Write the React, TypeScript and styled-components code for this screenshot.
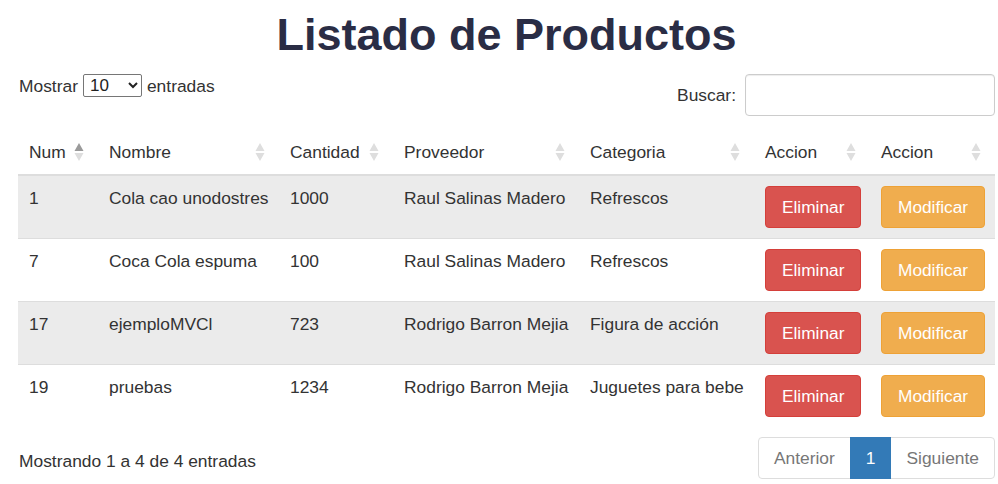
import React from "react";
import styled, { createGlobalStyle } from "styled-components";

const Global = createGlobalStyle`
  html, body { margin: 0; padding: 0; background: #fff; }
  body {
    font-family: "Liberation Sans", Arial, sans-serif;
    font-size: 17.4px;
    line-height: 24px;
    color: #333;
  }
  * { box-sizing: border-box; }
`;

const Page = styled.div`
  padding: 10px 3px 0 18px;
  width: 998px;
`;

const Title = styled.h1`
  margin: 0;
  text-align: center;
  font-size: 45px;
  line-height: 50px;
  font-weight: 700;
  color: #2a2d45;
`;

const Controls = styled.div`
  display: flex;
  justify-content: space-between;
  align-items: flex-start;
  margin-top: 14px;
`;

const LengthLabel = styled.label`
  display: flex;
  align-items: center;
  gap: 5px;
  height: 23px;
  padding-left: 1px;
`;

const Select = styled.select`
  width: 59px;
  height: 23px;
  font-family: "Liberation Sans", Arial, sans-serif;
  font-size: 17px;
  color: #222;
  border: 1px solid #767676;
  border-radius: 2px;
  background: #fff;
  padding: 0 2px;
`;

const SearchLabel = styled.label`
  display: flex;
  align-items: center;
  gap: 9px;
`;

const SearchInput = styled.input`
  width: 250px;
  height: 42px;
  border: 1px solid #ccc;
  border-radius: 4px;
  box-shadow: inset 0 1px 1px rgba(0, 0, 0, 0.075);
  font-size: 16px;
  padding: 6px 12px;
`;

const Table = styled.table`
  margin-top: 14px;
  width: 977px;
  border-collapse: collapse;
  table-layout: fixed;
`;

const Col = styled.col<{ $w: number }>`
  width: ${(p) => p.$w}px;
`;

const Th = styled.th`
  position: relative;
  text-align: left;
  font-weight: 400;
  padding: 10px 30px 10px 11px;
  line-height: 24px;
  border-bottom: 2px solid #ddd;
  white-space: nowrap;
`;

const SortIcon = styled.svg`
  position: absolute;
  right: 14px;
  top: 13px;
  width: 10px;
  height: 18px;
`;

const Tr = styled.tr<{ $striped: boolean }>`
  background: ${(p) => (p.$striped ? "#ebebeb" : "#fff")};
`;

const Td = styled.td<{ $lined: boolean }>`
  padding: 10px 10px 10px 11px;
  vertical-align: top;
  line-height: 24px;
  white-space: nowrap;
  border-bottom: ${(p) => (p.$lined ? "1px solid #ddd" : "0")};
`;

const Btn = styled.button<{ $variant: "danger" | "warning" }>`
  font-family: "Liberation Sans", Arial, sans-serif;
  font-size: 17.3px;
  line-height: 24px;
  padding: 8px 16px;
  border-radius: 4px;
  color: #fff;
  cursor: pointer;
  background: ${(p) => (p.$variant === "danger" ? "#d9534f" : "#f0ad4e")};
  border: 1px solid ${(p) => (p.$variant === "danger" ? "#d43f3a" : "#eea236")};
`;

const Footer = styled.div`
  display: flex;
  justify-content: space-between;
  align-items: flex-start;
  margin-top: 10px;
`;

const Info = styled.div`
  padding-top: 12px;
  padding-left: 1px;
`;

const Pager = styled.ul`
  display: flex;
  list-style: none;
  margin: 0;
  padding: 0;
`;

const PageItem = styled.li<{ $active?: boolean; $first?: boolean; $last?: boolean }>`
  padding: 8px 15px;
  line-height: 24px;
  height: 42px;
  color: ${(p) => (p.$active ? "#fff" : "#777")};
  background: ${(p) => (p.$active ? "#337ab7" : "#fff")};
  border: 1px solid ${(p) => (p.$active ? "#337ab7" : "#ddd")};
  margin-left: ${(p) => (p.$first ? "0" : "-1px")};
  border-radius: ${(p) =>
    p.$first ? "4px 0 0 4px" : p.$last ? "0 4px 4px 0" : "0"};
  position: relative;
  z-index: ${(p) => (p.$active ? 1 : 0)};
`;

const Sort = ({ active }: { active?: boolean }) => (
  <SortIcon viewBox="0 0 10 18">
    <polygon points="5,0 9.5,8 0.5,8" fill={active ? "#9a9a9a" : "#dedede"} />
    <polygon points="0.5,10 9.5,10 5,18" fill="#dedede" />
  </SortIcon>
);

const headers = ["Num", "Nombre", "Cantidad", "Proveedor", "Categoria", "Accion", "Accion"];
const widths = [80, 181, 114, 186, 175, 116, 125];

const rows = [
  { num: "1", nombre: "Cola cao unodostres", cantidad: "1000", proveedor: "Raul Salinas Madero", categoria: "Refrescos" },
  { num: "7", nombre: "Coca Cola espuma", cantidad: "100", proveedor: "Raul Salinas Madero", categoria: "Refrescos" },
  { num: "17", nombre: "ejemploMVCl", cantidad: "723", proveedor: "Rodrigo Barron Mejia", categoria: "Figura de acción" },
  { num: "19", nombre: "pruebas", cantidad: "1234", proveedor: "Rodrigo Barron Mejia", categoria: "Juguetes para bebe" },
];

export default function App() {
  return (
    <Page>
      <Global />
      <Title>Listado de Productos</Title>
      <Controls>
        <LengthLabel>
          Mostrar
          <Select defaultValue="10">
            <option value="10">10</option>
            <option value="25">25</option>
            <option value="50">50</option>
            <option value="100">100</option>
          </Select>
          entradas
        </LengthLabel>
        <SearchLabel>
          Buscar:
          <SearchInput type="search" />
        </SearchLabel>
      </Controls>
      <Table>
        <colgroup>
          {widths.map((w, i) => (
            <Col key={i} $w={w} />
          ))}
        </colgroup>
        <thead>
          <tr>
            {headers.map((h, i) => (
              <Th key={i}>
                {h}
                <Sort active={i === 0} />
              </Th>
            ))}
          </tr>
        </thead>
        <tbody>
          {rows.map((r, i) => {
            const lined = i < rows.length - 1;
            return (
              <Tr key={r.num} $striped={i % 2 === 0}>
                <Td $lined={lined}>{r.num}</Td>
                <Td $lined={lined}>{r.nombre}</Td>
                <Td $lined={lined}>{r.cantidad}</Td>
                <Td $lined={lined}>{r.proveedor}</Td>
                <Td $lined={lined}>{r.categoria}</Td>
                <Td $lined={lined}>
                  <Btn $variant="danger">Eliminar</Btn>
                </Td>
                <Td $lined={lined}>
                  <Btn $variant="warning">Modificar</Btn>
                </Td>
              </Tr>
            );
          })}
        </tbody>
      </Table>
      <Footer>
        <Info>Mostrando 1 a 4 de 4 entradas</Info>
        <Pager>
          <PageItem $first>Anterior</PageItem>
          <PageItem $active>1</PageItem>
          <PageItem $last>Siguiente</PageItem>
        </Pager>
      </Footer>
    </Page>
  );
}
